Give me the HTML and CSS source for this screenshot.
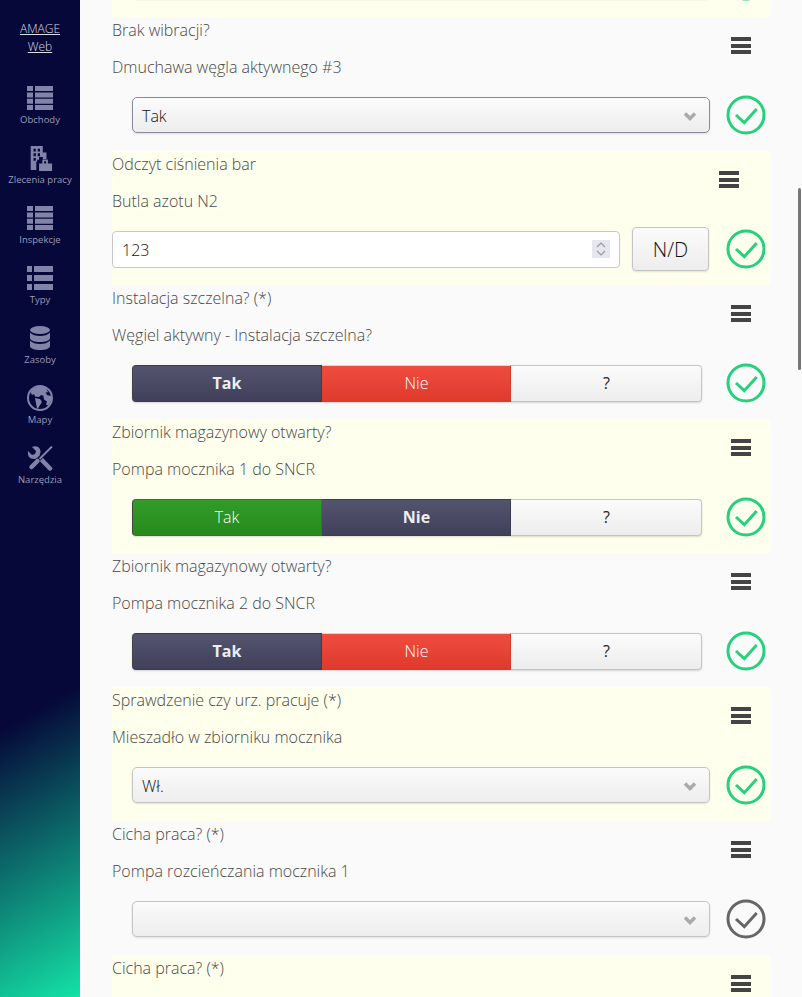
FILE: index.html
```html
<!DOCTYPE html>
<html lang="pl">
<head>
  <meta charset="UTF-8" />
  <meta name="viewport" content="width=device-width, initial-scale=1.0"/>
  <title>AMAGE Web</title>

  <link rel="stylesheet" href="styles.css">
</head>

<body>
  <aside class="sidebar">
    <a class="brand" href="#">AMAGE<br>Web</a>

    <a class="nav-item" href="#">
      <svg class="nav-icon" viewBox="0 0 26 26"><path d="M0 1h6v5H0zM8 1h18v5H8zM0 7.400h6v5H0zM8 7.400h18v5H8zM0 13.800h6v5H0zM8 13.800h18v5H8zM0 20h6v5H0zM8 20h18v5H8z"/></svg>
      <span>Obchody</span>
    </a>
    <a class="nav-item" href="#">
      <svg class="nav-icon" viewBox="0 0 26 28"><path fill-rule="evenodd" d="M3 1h13v7h4v7h-4v-2h-4v3h-2v2h-1v9H3zM6 4v3h2.500V4zM10.500 4v3H13V4zM6 9v3h2.500V9zM10.500 9v3H13V9zM6 14v3h2.500v-3z"/><path fill-rule="evenodd" d="M12 20h3.500v-4.500h6V20H26v8H12zM17.500 17.500V20h2v-2.500z"/></svg>
      <span>Zlecenia pracy</span>
    </a>
    <a class="nav-item" href="#">
      <svg class="nav-icon" viewBox="0 0 26 26"><path d="M0 1h6v5H0zM8 1h18v5H8zM0 7.400h6v5H0zM8 7.400h18v5H8zM0 13.800h6v5H0zM8 13.800h18v5H8zM0 20h6v5H0zM8 20h18v5H8z"/></svg>
      <span>Inspekcje</span>
    </a>
    <a class="nav-item" href="#">
      <svg class="nav-icon" viewBox="0 0 26 26"><path d="M0 1h5v6H0zM7 1h19v6H7zM0 10h5v6H0zM7 10h19v6H7zM0 19h5v6H0zM7 19h19v6H7z"/></svg>
      <span>Typy</span>
    </a>
    <a class="nav-item" href="#">
      <svg class="nav-icon" viewBox="0 0 26 26"><ellipse cx="13" cy="5" rx="10" ry="4"/><path d="M3 7.500c2 2.500 6 3.500 10 3.500s8-1 10-3.500V13c0 2.500-4.500 4-10 4S3 15.500 3 13zM3 15.500c2 2.500 6 3.500 10 3.500s8-1 10-3.500V21c0 2.500-4.500 4-10 4s-10-1.500-10-4z"/></svg>
      <span>Zasoby</span>
    </a>
    <a class="nav-item" href="#">
      <svg class="nav-icon" viewBox="0 0 26 26">
        <circle class="nav-line" cx="13" cy="13" r="12"/>
        <path d="M6 4c3-2.500 9-3.500 13-1l2 4-3 1-1 3-3-1-2 2-4-.5-1-2.500-2 1-1.500-3zM8 13l5 1 2 3-2 3-2 3.500h-1l-1-5zM16 8.500l3-.5 1 2 4.500 1c.5 3-1 7-3.500 9.500l-2-1 1-3-3-2z"/>
      </svg>
      <span>Mapy</span>
    </a>
    <a class="nav-item" href="#">
      <svg class="nav-icon" viewBox="0 0 26 26">
        <path d="M1 6l4 4 3-1 1-3-4-4c4-2 8 0 8.500 4 .1 1 0 1.500-.2 2.300L10 13.500c-3 1-6.500.3-8-1.500C1 10 .6 8 1 6z"/>
        <path class="nav-line gruba" d="M11 11L23 23.500"/>
        <path class="nav-line odstep" d="M24 2L6 20"/>
        <path class="nav-line" d="M25 1.500L12.500 14"/>
        <path class="nav-line gruba" d="M10.500 16L4.500 22"/>
      </svg>
      <span>Narzędzia</span>
    </a>
  </aside>

  <main class="lista">
    <section class="wiersz zolty">
      <div class="kontrolki">
        <div class="wybor"><span></span><svg class="strzalka" viewBox="0 0 14 9"><path d="M2 1.500l5 5 5-5"/></svg></div>
        <svg class="ok" viewBox="0 0 40 40"><circle cx="20" cy="20" r="18"/><path d="M10 20l8.300 7.700L30.700 14"/></svg>
      </div>
    </section>

    <section class="wiersz">
      <p>Brak wibracji?</p>
      <p>Dmuchawa węgla aktywnego #3</p>
      <div class="menu"><i></i><i></i><i></i></div>
      <div class="kontrolki">
        <div class="wybor aktywny"><span>Tak</span><svg class="strzalka" viewBox="0 0 14 9"><path d="M2 1.500l5 5 5-5"/></svg></div>
        <svg class="ok" viewBox="0 0 40 40"><circle cx="20" cy="20" r="18"/><path d="M10 20l8.300 7.700L30.700 14"/></svg>
      </div>
    </section>

    <section class="wiersz zolty">
      <p>Odczyt ciśnienia bar</p>
      <p>Butla azotu N2</p>
      <div class="menu menu-liczba"><i></i><i></i><i></i></div>
      <div class="kontrolki kontrolki-liczba">
        <div class="liczba">
          <span>123</span>
          <svg class="spinner" viewBox="0 0 18 18"><rect width="18" height="18"/><path d="M5 7l4-4 4 4M5 11l4 4 4-4"/></svg>
        </div>
        <button class="nd">N/D</button>
        <svg class="ok" viewBox="0 0 40 40"><circle cx="20" cy="20" r="18"/><path d="M10 20l8.300 7.700L30.700 14"/></svg>
      </div>
    </section>

    <section class="wiersz">
      <p>Instalacja szczelna? (*)</p>
      <p>Węgiel aktywny - Instalacja szczelna?</p>
      <div class="menu"><i></i><i></i><i></i></div>
      <div class="kontrolki">
        <div class="przelacznik">
          <button class="wybrany">Tak</button>
          <button class="czerwony">Nie</button>
          <button>?</button>
        </div>
        <svg class="ok" viewBox="0 0 40 40"><circle cx="20" cy="20" r="18"/><path d="M10 20l8.300 7.700L30.700 14"/></svg>
      </div>
    </section>

    <section class="wiersz zolty">
      <p>Zbiornik magazynowy otwarty?</p>
      <p>Pompa mocznika 1 do SNCR</p>
      <div class="menu"><i></i><i></i><i></i></div>
      <div class="kontrolki">
        <div class="przelacznik">
          <button class="zielony">Tak</button>
          <button class="wybrany">Nie</button>
          <button>?</button>
        </div>
        <svg class="ok" viewBox="0 0 40 40"><circle cx="20" cy="20" r="18"/><path d="M10 20l8.300 7.700L30.700 14"/></svg>
      </div>
    </section>

    <section class="wiersz">
      <p>Zbiornik magazynowy otwarty?</p>
      <p>Pompa mocznika 2 do SNCR</p>
      <div class="menu"><i></i><i></i><i></i></div>
      <div class="kontrolki">
        <div class="przelacznik">
          <button class="wybrany">Tak</button>
          <button class="czerwony">Nie</button>
          <button>?</button>
        </div>
        <svg class="ok" viewBox="0 0 40 40"><circle cx="20" cy="20" r="18"/><path d="M10 20l8.300 7.700L30.700 14"/></svg>
      </div>
    </section>

    <section class="wiersz zolty">
      <p>Sprawdzenie czy urz. pracuje (*)</p>
      <p>Mieszadło w zbiorniku mocznika</p>
      <div class="menu"><i></i><i></i><i></i></div>
      <div class="kontrolki">
        <div class="wybor"><span>Wł.</span><svg class="strzalka" viewBox="0 0 14 9"><path d="M2 1.500l5 5 5-5"/></svg></div>
        <svg class="ok" viewBox="0 0 40 40"><circle cx="20" cy="20" r="18"/><path d="M10 20l8.300 7.700L30.700 14"/></svg>
      </div>
    </section>

    <section class="wiersz">
      <p>Cicha praca? (*)</p>
      <p>Pompa rozcieńczania mocznika 1</p>
      <div class="menu"><i></i><i></i><i></i></div>
      <div class="kontrolki">
        <div class="wybor"><span></span><svg class="strzalka" viewBox="0 0 14 9"><path d="M2 1.500l5 5 5-5"/></svg></div>
        <svg class="ok szary" viewBox="0 0 40 40"><circle cx="20" cy="20" r="18"/><path d="M10 20l8.300 7.700L30.700 14"/></svg>
      </div>
    </section>

    <section class="wiersz zolty">
      <p>Cicha praca? (*)</p>
      <div class="menu"><i></i><i></i><i></i></div>
    </section>
  </main>

  <div class="scrollbar"></div>
</body>
</html>
```

FILE: styles.css
```css
html, body {
  height: 100%;
}
body {
  margin: 0;
  height: 997px;
  overflow: hidden;
  display: flex;
  font-family: "Open Sans", sans-serif;
  font-weight: 300;
  font-size: 16px;
  color: #484848;
  background-color: #fafafa;
}

/* menu boczne */
.sidebar {
  flex: 0 0 80px;
  height: 997px;
  display: flex;
  flex-direction: column;
  align-items: center;
  padding-top: 20px;
  box-sizing: border-box;
  background: linear-gradient(150deg, #050838 0%, #050838 70%, #14e2a6 100%);
}
.brand {
  color: #dcdce8;
  font-size: 12px;
  line-height: 18px;
  text-align: center;
  margin-bottom: 29px;
}
.nav-item {
  width: 80px;
  height: 60px;
  display: flex;
  flex-direction: column;
  align-items: center;
  gap: 2px;
  color: #9a9bbb;
  text-decoration: none;
  font-size: 9.500px;
  font-weight: 400;
  line-height: 14px;
}
.nav-icon {
  width: 26px;
  height: 26px;
  flex: none;
  fill: #8283a9;
}
.nav-line {
  fill: none;
  stroke: #8283a9;
  stroke-width: 2;
}
.gruba {
  stroke-width: 4.500;
  stroke-linecap: round;
}
.odstep {
  stroke: #050838;
  stroke-width: 4;
}

/* wiersze */
.lista {
  flex: 0 0 658px;
  margin: -117px 0 0 32px;
}
.wiersz {
  position: relative;
  height: 134px;
  box-sizing: border-box;
  padding-top: 2px;
}
.zolty {
  background-color: #ffffee;
}
.wiersz p {
  margin: 0 0 15px;
  line-height: 22px;
}
.menu {
  position: absolute;
  top: 20px;
  right: 19px;
  width: 20px;
  display: flex;
  flex-direction: column;
  gap: 2.500px;
}
.menu i {
  height: 4px;
  background-color: #444;
}
.menu-liczba {
  right: 31px;
}
.kontrolki {
  position: absolute;
  top: 78px;
  left: 20px;
  right: 4px;
  height: 40px;
  display: flex;
  align-items: center;
  justify-content: space-between;
}
.kontrolki-liczba {
  left: 0;
  top: 76px;
  height: 44px;
}

/* pola */
.wybor {
  width: 578px;
  height: 36px;
  box-sizing: border-box;
  padding: 2px 12px 0 9px;
  display: flex;
  align-items: center;
  justify-content: space-between;
  color: #111;
  background: linear-gradient(#fbfbfb, #ededed);
  border: 1px solid #c4c4c4;
  border-radius: 5px;
  box-shadow: 0 1px 2px rgba(0, 0, 0, 0.12);
}
.aktywny {
  border-color: #8a8a9a;
}
.strzalka {
  width: 14px;
  height: 9px;
  fill: none;
  stroke: #aaa;
  stroke-width: 3.500;
}
.ok {
  width: 40px;
  height: 40px;
  flex: none;
  fill: none;
  stroke: #26d07c;
  stroke-width: 3;
}
.szary {
  stroke: #666;
}

.liczba {
  width: 508px;
  height: 37px;
  box-sizing: border-box;
  padding: 2px 9px 0;
  display: flex;
  align-items: center;
  justify-content: space-between;
  color: #111;
  background-color: #fff;
  border: 1px solid #c8c8c8;
  border-radius: 4px;
}
.spinner {
  width: 18px;
  height: 18px;
  margin-top: -2px;
}
.spinner rect {
  fill: #e6e6ee;
}
.spinner path {
  fill: none;
  stroke: #999;
  stroke-width: 1.200;
}
.nd {
  width: 77px;
  height: 44px;
  margin-left: 12px;
  margin-right: 16px;
  padding: 0;
  font-family: inherit;
  font-size: 20px;
  font-weight: 300;
  color: #111;
  background: linear-gradient(#fbfbfb, #ededed);
  border: 1px solid #c4c4c4;
  border-radius: 4px;
  box-shadow: 0 1px 2px rgba(0, 0, 0, 0.12);
}
.kontrolki-liczba .ok {
  margin-left: auto;
}

/* przelacznik Tak / Nie / ? */
.przelacznik {
  width: 570px;
  height: 37px;
  display: grid;
  grid-template-columns: 190px 189px 191px;
  border-radius: 4px;
  box-shadow: 0 1px 2px rgba(0, 0, 0, 0.15);
}
.przelacznik button {
  padding: 0;
  font-family: inherit;
  font-size: 16px;
  font-weight: 400;
  color: #222;
  background: linear-gradient(#fbfbfb, #ededed);
  border: 1px solid #c4c4c4;
  border-left: 0;
}
.przelacznik button:not(:first-child) {
  padding-left: 1px;
}
.przelacznik button:first-child {
  border-left: 1px solid #444;
  border-radius: 4px 0 0 4px;
}
.przelacznik button:last-child {
  border-radius: 0 4px 4px 0;
}
.przelacznik .wybrany {
  font-weight: 700;
  color: #eee;
  background: linear-gradient(#54546f, #40405a);
  border-color: #3c3c50;
}
.przelacznik .czerwony {
  font-weight: 300;
  color: #fff;
  background: linear-gradient(#ef4c40, #df3a2c);
  border-color: #d8d8d8 #d83a2c #d83a2c;
}
.przelacznik .zielony {
  font-weight: 300;
  color: #fff;
  background: linear-gradient(#319c27, #278a1c);
  border-color: #2a7d20;
}

.scrollbar {
  position: absolute;
  top: 188px;
  left: 798px;
  width: 3px;
  height: 182px;
  background-color: #777;
  border-radius: 2px;
}
```
